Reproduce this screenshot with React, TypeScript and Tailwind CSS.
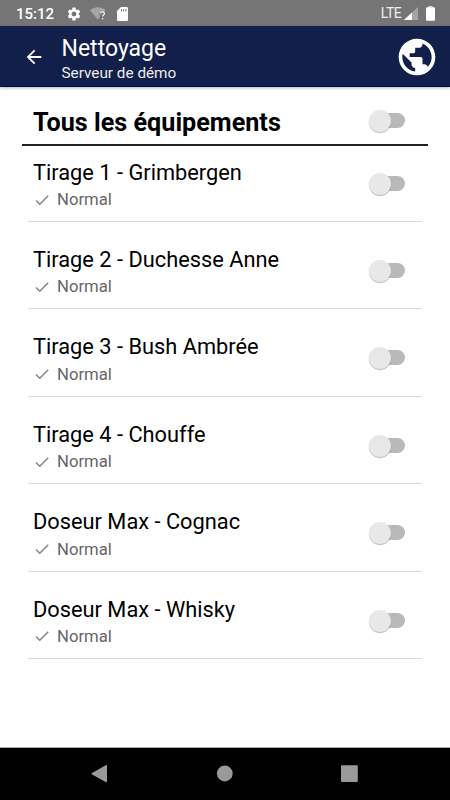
import { MdArrowBack, MdCheck, MdSettings } from 'react-icons/md';

interface Equipment {
  name: string;
  status: string;
}

const equipments: Equipment[] = [
  { name: 'Tirage 1 - Grimbergen', status: 'Normal' },
  { name: 'Tirage 2 - Duchesse Anne', status: 'Normal' },
  { name: 'Tirage 3 - Bush Ambrée', status: 'Normal' },
  { name: 'Tirage 4 - Chouffe', status: 'Normal' },
  { name: 'Doseur Max - Cognac', status: 'Normal' },
  { name: 'Doseur Max - Whisky', status: 'Normal' },
];

function Toggle() {
  return (
    <button type="button" role="switch" aria-checked={false} className="relative h-[22px] w-9 shrink-0">
      <span className="absolute top-[3px] right-0 h-[15px] w-7 rounded-full bg-[#b9b9b9]" />
      <span className="absolute top-0 left-0 size-[22px] rounded-full bg-[#e8e8e8] shadow-[0_1px_1px_rgba(0,0,0,0.28)]" />
    </button>
  );
}

function StatusBar() {
  return (
    <div className="flex h-[26px] items-center bg-[#757575] pt-px pr-[15px] pl-4 text-white">
      <span className="w-[50px] pt-px text-[15px] font-medium">15:12</span>
      <MdSettings className="size-4" />
      <svg className="ml-2 h-[13px] w-4" viewBox="0 0 16 13">
        <path d="M0 3.2C4.5-.6 11-.6 15.5 3.2L13.8 5.3C11.5 4 9.6 5.2 9.4 7.2L9.8 10.2 7.8 12.6Z" fill="#a5a5a5" />
        <path d="M10.6 6.5c.1-2.3 3.9-2.1 3.8.1 0 1.3-1.8 1.4-1.8 3M12.6 11v1.5" fill="none" stroke="#eee" strokeWidth="1.3" />
      </svg>
      <svg className="ml-[11px] h-[14px] w-[11px]" viewBox="0 0 11 14">
        <path d="M4 0h5.7Q11 0 11 1.3v11.4Q11 14 9.7 14H1.3Q0 14 0 12.7V4Z" fill="#fff" />
        <path d="M4.5 2v2.5M6.7 2v2.5M8.9 2v2.5" stroke="#757575" strokeWidth="1" />
      </svg>
      <span className="mr-[3px] ml-auto text-[14px] tracking-[-0.6px] text-[#eee]">LTE</span>
      <svg className="h-[13px] w-[14px]" viewBox="0 0 14 13">
        <path d="M14 0v13H0Z" fill="#a5a5a5" />
        <path d="M8 5.6V13H0Z" fill="#fff" />
      </svg>
      <svg className="ml-2 h-[15px] w-[9px]" viewBox="0 0 9 15">
        <path d="M2.5 0h4v1.5h-4z" fill="#ddd" />
        <path d="M1 1.2h7q1 0 1 1v11.6q0 1-1 1H1q-1 0-1-1V2.2q0-1 1-1Z" fill="#fff" />
      </svg>
    </div>
  );
}

function AppBar() {
  return (
    <header className="relative flex h-[61px] items-center border-b border-[#05094a] bg-[#111f4a] pt-[2px] pr-[11px] pl-[22.5px] text-white shadow-[0_1px_3px_rgba(0,0,0,0.3)]">
      <MdArrowBack className="size-[22px]" />
      <div className="ml-[17px] pt-[5px]">
        <h1 className="text-[23px] leading-[27px]">Nettoyage</h1>
        <p className="text-[15.3px] leading-[23px] text-[#ececec]">Serveur de démo</p>
      </div>
      <svg className="ml-auto size-11" viewBox="0 0 24 24" fill="currentColor">
        <path d="M12 2C6.48 2 2 6.48 2 12s4.48 10 10 10 10-4.48 10-10S17.52 2 12 2zm-1 17.93c-3.95-.49-7-3.85-7-7.93 0-.62.08-1.21.21-1.79L9 15v1c0 1.1.9 2 2 2v1.93zm6.9-2.54c-.26-.81-1-1.39-1.9-1.39h-1v-3c0-.55-.45-1-1-1H8v-2h2c.55 0 1-.45 1-1V7h2c1.1 0 2-.9 2-2v-.41c2.93 1.19 5 4.06 5 7.41 0 2.08-.8 3.97-2.1 5.39z" />
      </svg>
    </header>
  );
}

function EquipmentRow({ name, status }: Equipment) {
  return (
    <li className="mx-7 flex h-[87.4px] items-start justify-between border-b border-[#d9d9d9] pt-[24px] pr-[17px] pl-[5px]">
      <div>
        <h3 className="text-[21.8px] leading-[28px] text-black">{name}</h3>
        <div className="flex items-center pt-[0.4px] text-[16.7px] leading-[25px] text-[#666]">
          <MdCheck className="mr-[6px] size-[18px] text-[#858585]" />
          {status}
        </div>
      </div>
      <span className="mt-[14px]">
        <Toggle />
      </span>
    </li>
  );
}

function NavigationBar() {
  return (
    <nav className="mt-auto h-[53px] border-t border-[#aaa] bg-black">
      <svg className="h-[52px] w-[450px]" viewBox="0 0 450 52" fill="#999">
        <path d="M91.7 25.2 105.7 17.3Q107 16.7 107 18v15.5q0 1.3-1.3.6L91.7 26.2Q91 25.7 91.7 25.2Z" />
        <circle cx="224.8" cy="25.5" r="7.9" />
        <rect x="341" y="17.2" width="16.8" height="16.8" rx="1" />
      </svg>
    </nav>
  );
}

export default function App() {
  return (
    <div className="flex h-[800px] w-[450px] flex-col overflow-hidden bg-white font-['Roboto',sans-serif]">
      <StatusBar />
      <AppBar />
      <main>
        <div className="mx-[22px] flex h-[58.5px] items-start justify-between border-b-2 border-[#222] pt-[21px] pr-[23px] pl-[11px]">
          <h2 className="text-[25.2px] leading-[30px] font-bold text-black">Tous les équipements</h2>
          <span className="mt-[2px]">
            <Toggle />
          </span>
        </div>
        <ul className="-mt-[10.9px]">
          {equipments.map((equipment) => (
            <EquipmentRow key={equipment.name} {...equipment} />
          ))}
        </ul>
      </main>
      <NavigationBar />
    </div>
  );
}
